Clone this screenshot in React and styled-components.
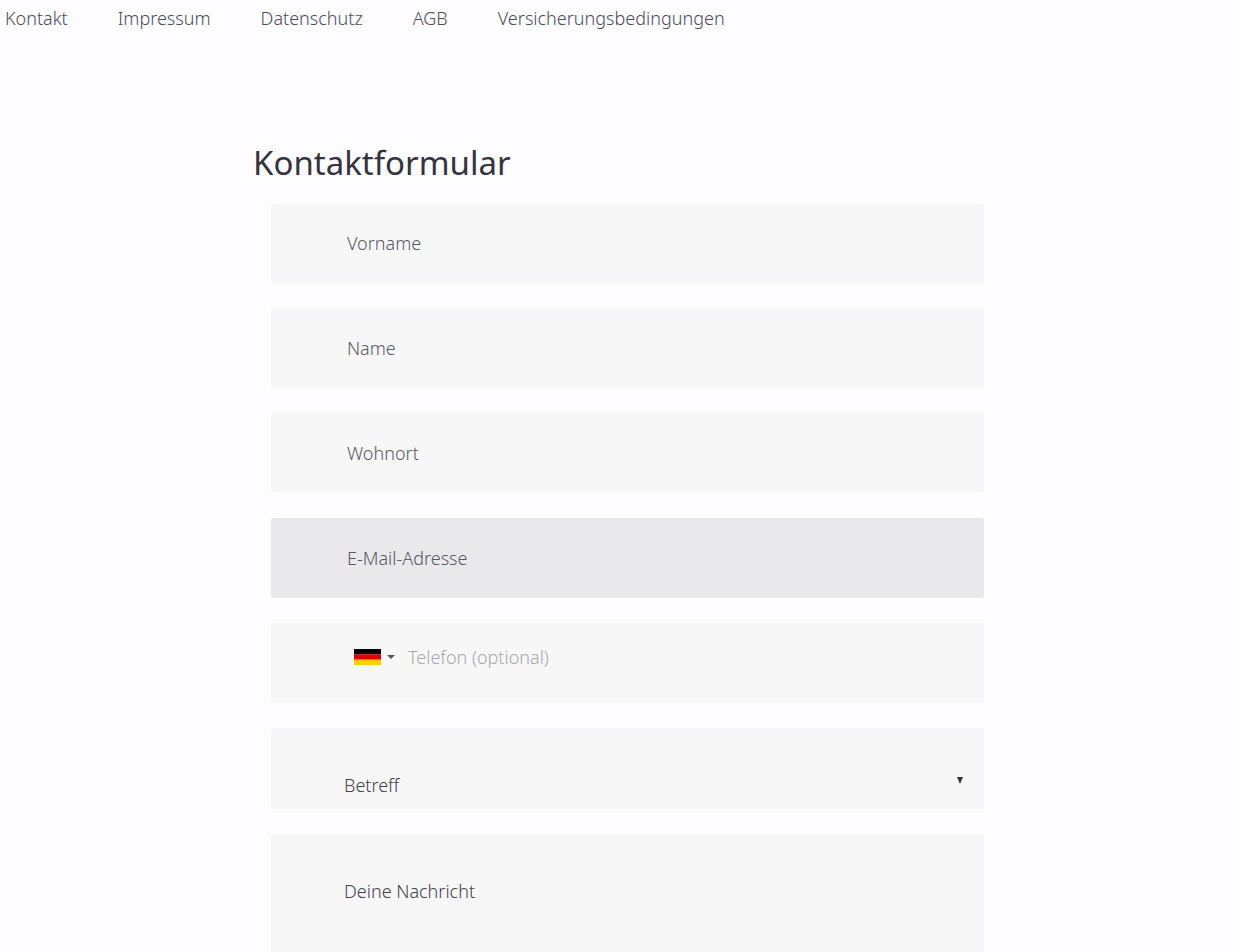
import React from "react";
import styled, { createGlobalStyle } from "styled-components";

const Global = createGlobalStyle`
  html, body { margin: 0; padding: 0; height: 952px; overflow: hidden; background: #fdfdff; }
  body { font-family: "Noto Sans", "Open Sans", sans-serif; font-weight: 300; color: #35333f; }
`;

const Nav = styled.nav`
  display: flex;
  gap: 50px;
  padding: 6px 0 0 5px;
  height: 30px;
  box-sizing: border-box;
`;
const NavLink = styled.a`
  font-size: 18px;
  line-height: 24px;
  color: #4d4b58;
`;
const Main = styled.main`
  width: 731px;
  margin: 0 0 0 253px;
  padding-top: 110px;
`;
const Title = styled.h1`
  margin: 0 0 18px;
  font-size: 33px;
  line-height: 45px;
  font-weight: 400;
  color: #35333f;
`;
const Form = styled.form`
  display: flex;
  flex-direction: column;
  gap: 25px;
  margin-left: 18px;
`;
const Field = styled.div`
  position: relative;
  display: flex;
  align-items: ${p => p.$align || "center"};
  gap: 0;
  height: ${p => p.$h || 80}px;
  box-sizing: border-box;
  padding: ${p => p.$pad || "0 0 0 76px"};
  background: ${p => (p.$active ? "#e9e9eb" : "#f7f7f7")};
  border-radius: 3px;
  font-size: 18px;
  color: #5a5866;
`;
const Dark = styled.span`
  color: #45404c;
  line-height: 24px;
`;
const Caret = styled.span`
  width: 0;
  height: 0;
  margin: 0 13px 0 6px;
  border-left: 4px solid transparent;
  border-right: 4px solid transparent;
  border-top: 4px solid #555;
`;
const Placeholder = styled.span`
  color: #a9a8ae;
  line-height: 24px;
`;
const Arrow = styled.span`
  position: absolute;
  right: 21px;
  top: 49px;
  width: 0;
  height: 0;
  border-left: 3.5px solid transparent;
  border-right: 3.5px solid transparent;
  border-top: 7px solid #35333f;
`;
const PhoneRow = styled.div`
  display: flex;
  align-items: center;
  margin-top: -12px;
`;
const Flag = () => (
  <svg width="27" height="16" viewBox="0 0 27 16" style={{ display: "block" }}>
    <rect width="27" height="5.4" fill="#000" />
    <rect y="5.3" width="27" height="5.4" fill="#d00" />
    <rect y="10.7" width="27" height="5.3" fill="#ffce00" />
  </svg>
);

export default function App() {
  return (
    <>
      <Global />
      <Nav>
        {["Kontakt", "Impressum", "Datenschutz", "AGB", "Versicherungsbedingungen"].map(t => (
          <NavLink key={t}>{t}</NavLink>
        ))}
      </Nav>
      <Main>
        <Title>Kontaktformular</Title>
        <Form>
          <Field>Vorname</Field>
          <Field>Name</Field>
          <Field>Wohnort</Field>
          <Field $active>E-Mail-Adresse</Field>
          <Field $pad="0 0 0 83px">
            <PhoneRow>
              <Flag />
              <Caret />
              <Placeholder>Telefon (optional)</Placeholder>
            </PhoneRow>
          </Field>
          <Field $h={81} $align="flex-start" $pad="45px 0 0 73px">
            <Dark>Betreff</Dark>
            <Arrow />
          </Field>
          <Field $h={130} $align="flex-start" $pad="45px 0 0 73px">
            <Dark>Deine Nachricht</Dark>
          </Field>
        </Form>
      </Main>
    </>
  );
}
